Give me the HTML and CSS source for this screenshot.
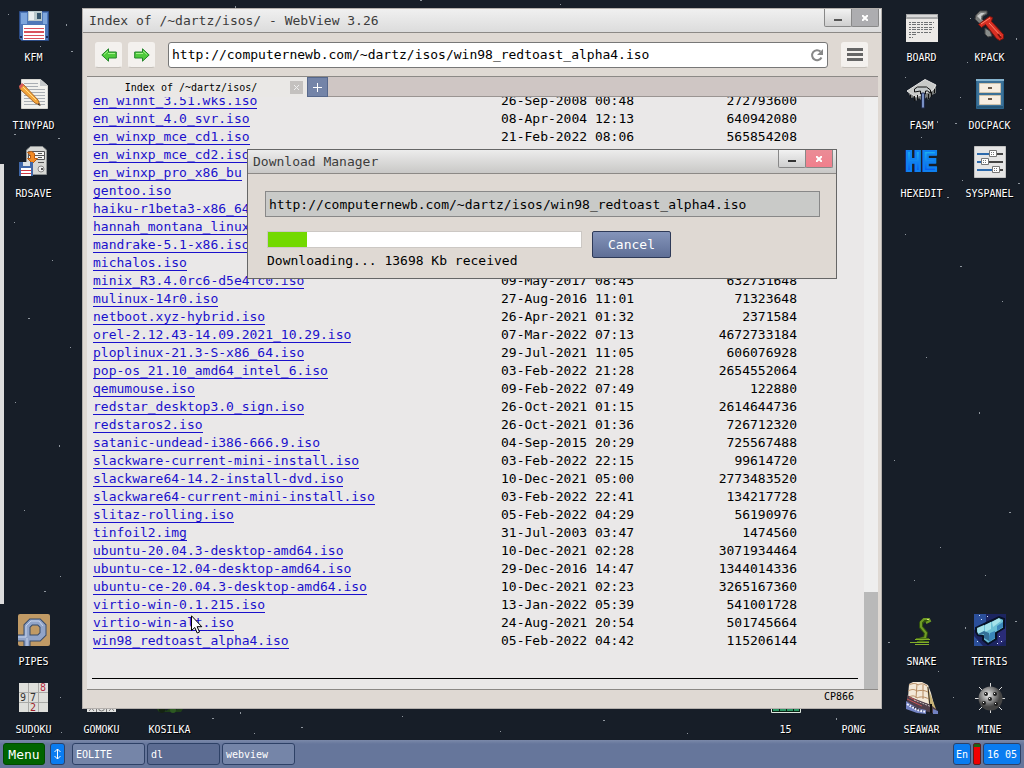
FILE: index.html
```html
<!DOCTYPE html>
<html lang="en">
<head>
  <meta charset="UTF-8">
  <meta name="viewport" content="width=device-width, initial-scale=1.0">
  <title>KolibriOS Desktop</title>
  <link rel="stylesheet" href="styles.css">
</head>
<body>
  <main class="desktop">
    <!-- stars -->
    <svg class="stars" width="1024" height="740" aria-hidden="true">
      <path fill="#8e959d" d="M8 14h1v1h-1zM66 24h1v2h-1zM40 46h1v1h-1zM71 51h2v1h-2zM14 134h2v1h-2zM58 138h2v1h-2zM235 6h1v2h-1zM420 0h2v1h-2zM970 18h1v1h-1zM1016 38h1v2h-1zM967 62h1v1h-1zM905 77h1v1h-1zM960 97h1v1h-1zM1020 109h2v1h-2zM937 121h1v2h-1zM955 123h2v1h-2zM921 137h1v1h-1zM1018 183h2v1h-2zM947 197h2v1h-2zM962 180h1v1h-1zM14 222h1v1h-1zM52 260h1v1h-1zM28 318h2v1h-2zM70 347h1v1h-1zM15 402h1v1h-1zM59 445h1v2h-1zM24 510h1v1h-1zM60 576h1v1h-1zM44 591h2v1h-2zM60 697h1v1h-1zM212 718h2v1h-2zM240 712h1v2h-1zM301 727h2v1h-2zM254 733h1v1h-1zM32 736h2v1h-2zM61 732h1v1h-1zM402 716h1v1h-1zM500 731h1v1h-1zM603 720h2v1h-2zM687 733h1v1h-1zM836 718h1v2h-1zM953 697h1v1h-1zM888 642h2v1h-2zM965 627h1v2h-1zM1015 621h2v1h-2zM938 671h1v1h-1zM914 580h1v1h-1zM905 234h1v1h-1zM960 266h2v1h-2zM1002 301h1v1h-1zM926 357h1v1h-1zM979 412h1v2h-1zM894 460h1v1h-1zM1009 512h2v1h-2zM940 547h1v1h-1zM985 575h1v1h-1zM560 4h1v1h-1z"/>
    </svg>
    <div class="side-bar"></div>

    <div class="icon-row">
      <div class="icon-group left">
        <button class="icon">
          <svg width="32" height="32" viewBox="0 0 32 32">
            <path fill="#4f78b8" stroke="#2c4c86" d="M1.500 1.500h29v29h-27l-2-2z"/>
            <path fill="#7ea6dc" d="M3 3h6v11H3zM25 3h4v11h-4z"/>
            <path fill="#b9c8cc" d="M10 1h14v10H10z"/><path fill="#e9eef0" d="M11 2h5v8h-5z"/>
            <path fill="#33536b" d="M19 3h4v6h-4z"/>
            <path fill="#fff" d="M5 15h22v15H5z"/>
            <path fill="#d9525c" d="M6 18h20v1H6zM6 21h20v2H6zM6 25h20v1H6zM6 28h20v1H6z"/>
            <path fill="#1d2c55" d="M2 26h2v2H2zM28 26h2v2h-2z"/>
          </svg>
          <span>KFM</span>
        </button>
        <button class="icon">
          <svg width="32" height="32" viewBox="0 0 32 32">
            <path fill="#f1f1ed" stroke="#d5d5d0" d="M3.500 1.500h19l7 6v23h-26z"/>
            <path fill="#c4c8ca" d="M22 1v7h8z"/>
            <path stroke="#a9aeb3" d="M6 5.500h14M6 8.500h14M6 11.500h21M6 14.500h21M6 17.500h21M6 20.500h21M6 23.500h21M6 26.500h21"/>
            <path fill="#f3a63c" stroke="#a8682a" d="M2 8l3-2 15 16 2 5-5-2L2 11z"/>
            <path stroke="#ffe08a" d="M5 9l13 13"/>
            <path fill="#d95d5d" d="M1 8l3-3 2 2-4 4z"/>
            <path fill="#333" d="M20 25l3 3-3-1z"/>
          </svg>
          <span>TINYPAD</span>
        </button>
        <button class="icon">
          <svg width="32" height="32" viewBox="0 0 32 32">
            <path fill="#d7d8d5" stroke="#8d9192" d="M8.500 4l4-3.500h12l4 3.500v24.500h-20z"/>
            <path fill="#f5f5f3" stroke="#555" d="M10.500 5.500h16v4h-16zM10.500 9.500h16v4h-16z"/>
            <path stroke="#555" d="M20 7.500h4M20 11.500h4M20 16.500h6"/>
            <circle cx="23" cy="23" r="3" fill="#eee" stroke="#888"/><path fill="#555" d="M23 22h2v2h-2z"/>
            <path fill="#f28b24" stroke="#b95a10" d="M9.500 6.500l4-1 3 2v5h3l-5 5-5-5h3V9z"/>
            <path fill="#3f67a8" d="M1 16h14v14H1z"/><path fill="#dbe2e6" d="M5 16h7v4H5z"/>
            <path fill="#fff" d="M3 22h10v8H3z"/><path fill="#d03a44" d="M3 24h10v1H3zM3 27h10v1H3z"/>
          </svg>
          <span>RDSAVE</span>
        </button>
      </div>

      <div class="icon-group right">
        <button class="icon">
          <svg width="32" height="32" viewBox="0 0 32 32">
            <path fill="#eceae7" d="M0 4h32v28H0z"/><path fill="#a8a9aa" d="M0 4h32v5H0z"/><path fill="#d9d9d9" d="M1 5h30v2H1z"/>
            <path stroke="#6f7274" stroke-dasharray="2 1 4 1 3 1" d="M3 12.500h25M3 14.500h24M3 17.500h25M3 19.500h24M3 22.500h22M3 24.500h8M3 27.500h4"/>
          </svg>
          <span>BOARD</span>
        </button>
        <button class="icon">
          <svg width="32" height="32" viewBox="0 0 32 32">
            <path fill="#7d7f7e" stroke="#454545" d="M1 9l1-4 4-4h7v3L9 6 8 9l3 3-2 3-4-2z"/>
            <path fill="#c9cbca" d="M3 6l4-3h4L7 6v4z"/>
            <path fill="#898d8b" stroke="#454545" d="M11 18l5 3 2 5-4 1-3-3z"/>
            <path fill="#d92f23" stroke="#7b130d" d="M4.500 14.500L15.500 6.500l3 1-1 4 12 13v4l-4 2-3-2-11-14-4 3z"/>
            <path fill="none" stroke="#ff8a70" d="M7 14l9-6M15 13l12 13"/>
            <path stroke="#7b130d" stroke-width="2" d="M24 24l3 4"/>
          </svg>
          <span>KPACK</span>
        </button>
        <button class="icon">
          <svg width="32" height="32" viewBox="0 0 32 32">
            <path fill="#777a79" d="M2 14l3 6 4-1 1 4 3-3 3 3 5-4 1 3 4-5 4-2V7z"/>
            <path fill="#c8cac8" stroke="#e4e4e4" d="M1 13L19 1.500 30 7l-3 5-17 7z"/>
            <path fill="#c3c8c9" stroke="#111" d="M8.500 14v-3l3-2h9l4 3v3l-3-2h-2v3h-5v-3z"/>
            <path fill="#7890c4" stroke="#202a49" d="M15.500 15h3v15h-3z"/>
            <path stroke="#111" d="M4.500 17v3M8.500 18v5M11.500 17v5M22.500 16v5M25.500 14v5M28.500 11v4"/>
          </svg>
          <span>FASM</span>
        </button>
        <button class="icon">
          <svg width="32" height="32" viewBox="0 0 32 32">
            <path fill="#3b7198" stroke="#2c6288" d="M2.500 1.500h27v29h-27z"/><path fill="#86b4cf" d="M2 1h28v2H2z"/>
            <path fill="#f6eee2" stroke="#cfc3ac" d="M5.500 5.500h21v9h-21zM5.500 17.500h21v9h-21z"/>
            <path fill="#69594a" d="M14 9h4v2h-4zM14 20h4v2h-4z"/><path fill="#275879" d="M3 28h26v2H3z"/>
          </svg>
          <span>DOCPACK</span>
        </button>
        <button class="icon">
          <span class="he-logo" aria-hidden="true">HE</span>
          <span>HEXEDIT</span>
        </button>
        <button class="icon">
          <svg width="32" height="32" viewBox="0 0 32 32">
            <path fill="#e5e5e5" stroke="#c2c2c2" d="M.5.5h31v31H.5z"/>
            <path stroke="#444" stroke-width="2" d="M3 8h26M3 16h26M3 24h26"/>
            <path stroke="#2d6aac" stroke-width="2" d="M3 8h13M3 16h5M3 24h16"/>
            <path fill="#fff" stroke="#777" d="M15.500 4.500h7v6h-7zM7.500 12.500h7v6h-7zM18.500 20.500h7v6h-7z"/>
            <path stroke="#777" stroke-dasharray="1 1" d="M17 6.500h4M17 8.500h4M9 14.500h4M9 16.500h4M20 22.500h4M20 24.500h4"/>
          </svg>
          <span>SYSPANEL</span>
        </button>
      </div>
    </div>

    <div class="icon-row">
      <div class="icon-group left-bottom">
        <button class="icon wide">
          <svg width="32" height="32" viewBox="0 0 32 32">
            <rect width="32" height="32" rx="2" fill="#c09a65"/>
            <path fill="none" stroke="#354a6b" stroke-width="7" d="M0 24h9V12l4-4h8l4 4v8l-4 4H9M9 21v11"/>
            <path fill="none" stroke="#91a4c8" stroke-width="5" d="M0 24h9V12l4-4h8l4 4v8l-4 4H9M9 21v11"/>
            <path fill="none" stroke="#c5d2ea" d="M0 23h8V12l5-5h8l4 5M9 24v8"/>
          </svg>
          <span>PIPES</span>
        </button>
        <button class="icon">
          <svg width="32" height="32" viewBox="0 0 32 32">
            <path fill="#a9aaa7" d="M1 1h29v29H1z"/>
            <path fill="#dedfdb" d="M1 1h9v9H1zM11 1h9v9h-9zM21 1h9v9h-9zM1 11h9v9H1zM11 11h9v9h-9zM21 11h9v9h-9zM1 21h9v9H1zM11 21h9v9h-9zM21 21h9v9h-9z"/>
            <g class="sudoku-digits"><text x="22" y="9" fill="#b52b43">8</text><text x="2" y="19">9</text><text x="12" y="19">7</text><text x="12" y="29" fill="#a01e28">2</text></g>
          </svg>
          <span>SUDOKU</span>
        </button>
        <button class="icon">
          <svg width="32" height="32" viewBox="0 0 32 32">
            <path fill="#e4e4e2" d="M1 1h29v29H1z"/>
            <path stroke="#777" d="M10.500 1v29M20.500 1v29M1 10.500h29M1 20.500h29M3 29l5-6M3 23l5 6M23 29l5-6M23 23l5 6"/><circle cx="15.500" cy="26" r="3" fill="none" stroke="#777"/>
          </svg>
          <span>GOMOKU</span>
        </button>
        <button class="icon">
          <svg width="32" height="32" viewBox="0 0 32 32">
            <path fill="#1f3f19" d="M2 26h8l2 3 4-3 5 3 3-3 5 1-2 3H5z"/><circle cx="8" cy="28" r="3" fill="#142312"/><circle cx="19" cy="28" r="3" fill="#2d5a22"/>
          </svg>
          <span>KOSILKA</span>
        </button>
      </div>

      <div class="icon-group right-bottom">
        <button class="icon snake">
          <svg width="32" height="32" viewBox="0 0 32 32">
            <path fill="none" stroke="#31520f" stroke-width="4" d="M23 6h-5l-3 3v4l5 6-1 5-6 2"/>
            <path fill="none" stroke="#6f9c25" stroke-width="2" d="M20 9l4-2-1-2-5 0-3 3v5l5 6-1 5-5 1"/>
            <path stroke="#4b7215" d="M10 24.500h13M11 27.500h12"/>
            <path stroke="#83ad2b" d="M9 25.500h15M4 28.500h19M9 30.500h14"/>
            <path fill="#dce57b" d="M21 5h2v1h-2z"/>
          </svg>
          <span>SNAKE</span>
        </button>
        <button class="icon">
          <svg width="32" height="32" viewBox="0 0 32 32">
            <path fill="#1c2560" d="M0 0h32v32H0z"/><path fill="#2b4f9a" d="M0 0h12v8L0 16zM0 22l9 10H0z"/><path fill="#2a2c78" d="M24 18l8-6v14l-8 6z"/>
            <path fill="#6cc0d5" stroke="#081225" stroke-width="2" d="M2 14L25 3l5 2v9l-8 5v6l-8 5-5-4v-4l-5-1-2-3z"/>
            <path fill="#a5e2ea" d="M3 14l7-3v6l-6 3zM11 11l6-3v7l-6 3zM18 8l7-4 2 3-8 6z"/>
            <path fill="#3a86ba" d="M16 19l5-2v7l-6 4v-6zM23 12l6-4v5l-6 4z"/><path fill="#347098" d="M4 20l6-3 5 2v8l-5-3v-4l-5 1z"/>
            <path fill="#dbeaff" d="M7 5h1v1H7zM13 2h1v1h-1zM27 27h1v1h-1zM25 22h1v1h-1zM3 27h1v1H3zM5 1h1v1H5zM23 29h1v1h-1z"/>
          </svg>
          <span>TETRIS</span>
        </button>
        <button class="icon">
          <svg width="32" height="32" viewBox="0 0 32 32">
            <path fill="#092313" stroke="#dfe8e0" d="M1.500 1.500h29v29h-29z"/>
            <path stroke="#2f9766" stroke-width="4" stroke-dasharray="6 1" d="M3 27h26M3 20h26M3 13h26M3 6h26"/>
          </svg>
          <span>15</span>
        </button>
        <button class="icon">
          <svg width="32" height="32" viewBox="0 0 32 32"><path fill="#ddd" d="M2 6h3v12H2zM27 2h3v12h-3zM14 12h3v3h-3z"/></svg>
          <span>PONG</span>
        </button>
        <button class="icon">
          <svg width="32" height="32" viewBox="0 0 32 32">
            <path fill="#f3e8d8" d="M3 2l4-2h9l6 3 3 8 3 12-6-1-20-6z"/>
            <path fill="none" stroke="#b58a60" d="M3 3c4-2 7-2 9 0 4-2 6-1 9 1M2 9c4-2 6-2 9 0 4-1 7-1 11 1M3 15c4-2 6-1 8 1 4-2 8-1 12 1M11 2l-1 14M17 3v14"/>
            <path fill="#c9b477" d="M21 3l9 24-7-3z"/><path stroke="#332a2a" d="M22 5l2 20"/>
            <path fill="#50404a" d="M1 13l6 3 18 7 6 5-4 3-13-3-13-8z"/>
            <path stroke="#c45355" d="M1 17l15 7M3 15l8 4"/><path stroke="#c5bfc0" stroke-dasharray="2 1" d="M8 18l18 7"/>
            <path fill="#7181c1" d="M0 19l11 7 9 2v4l-9-1-11-4zM27 27l5 2v3h-5z"/>
            <path stroke="#eeeeff" stroke-width="2" stroke-dasharray="2 1" d="M1 22l10 6 9 2"/><path stroke="#111" stroke-width="2" d="M25 22v9"/>
          </svg>
          <span>SEAWAR</span>
        </button>
        <button class="icon">
          <svg width="32" height="32" viewBox="0 0 32 32">
            <defs><radialGradient id="mine" cx="40%" cy="35%"><stop stop-color="#eee"/><stop offset=".5" stop-color="#999"/><stop offset="1" stop-color="#444"/></radialGradient></defs>
            <path stroke="#ddd" d="M16.500 1v30M1 16.500h30M5 5l23 23M28 5L5 28"/>
            <circle cx="16.500" cy="16.500" r="12" fill="url(#mine)"/>
            <g fill="#222"><circle cx="12" cy="12" r="2"/><circle cx="21" cy="12" r="2"/><circle cx="16" cy="17" r="2"/><circle cx="10" cy="21" r="2"/><circle cx="22" cy="22" r="2"/></g>
            <path fill="#fff" d="M11 11h1v1h-1zM20 11h1v1h-1zM15 16h1v1h-1zM9 20h1v1H9zM21 21h1v1h-1z"/>
          </svg>
          <span>MINE</span>
        </button>
      </div>
    </div>

    <!-- browser window -->
    <section class="window browser">
      <header class="title-bar">
        <h1>Index of /~dartz/isos/ - WebView 3.26</h1>
        <div class="window-buttons">
          <button aria-label="Minimize"><svg width="8" height="8"><path fill="#555" d="M0 5h8v2H0z"/></svg></button>
          <button class="close" aria-label="Close"><svg width="6" height="6"><path stroke="#fff" stroke-width="2" d="M0 0l6 6M6 0L0 6"/></svg></button>
        </div>
      </header>
      <div class="toolbar">
        <button class="tool" aria-label="Back"><svg width="16" height="14" viewBox="0 0 16 14"><path fill="#4fcb3c" stroke="#23842a" d="M.8 7L7.500.8v3.200h7.800v6H7.500v3.200z"/><path stroke="#a5f08d" d="M3 6.500l4-3.500M7 5.500h7"/></svg></button>
        <button class="tool" aria-label="Forward"><svg width="16" height="14" viewBox="0 0 16 14"><path fill="#4fcb3c" stroke="#23842a" d="M15.200 7L8.500.8v3.200H.7v6h7.800v3.200z"/><path stroke="#a5f08d" d="M13 6.500L9 3M9 5.500H2"/></svg></button>
        <form class="address">
          <input type="text" aria-label="Address" value="http://computernewb.com/~dartz/isos/win98_redtoast_alpha4.iso">
          <button type="button" aria-label="Reload"><svg width="14" height="14" viewBox="0 0 14 14"><path fill="none" stroke="#888" stroke-width="2" d="M11.500 9.500A5 5 0 1 1 10.500 3.500"/><path fill="#888" d="M13 1v6H7z"/></svg></button>
        </form>
        <button class="tool" aria-label="Settings"><svg width="16" height="14"><path fill="#666" d="M0 0h16v3H0zM0 5h16v3H0zM0 10h16v3H0z"/></svg></button>
      </div>
      <div class="page">
        <div class="tabs">
          <div class="tab">
            <span>Index of /~dartz/isos/</span>
            <button class="tab-close" aria-label="Close tab"><svg width="7" height="7"><path stroke="#eee" d="M1 1l5 5M6 1L1 6"/></svg></button>
          </div>
          <button class="new-tab" aria-label="New tab"><svg width="9" height="9"><path stroke="#fff" d="M4.500 0v9M0 4.500h9"/></svg></button>
        </div>
        <div class="view">
          <div class="listing">
            <table>
              <tbody>
                <tr><td><a href="#">en_winnt_3.51.wks.iso</a></td><td>26-Sep-2008 00:48</td><td>272793600</td></tr>
                <tr><td><a href="#">en_winnt_4.0_svr.iso</a></td><td>08-Apr-2004 12:13</td><td>640942080</td></tr>
                <tr><td><a href="#">en_winxp_mce_cd1.iso</a></td><td>21-Feb-2022 08:06</td><td>565854208</td></tr>
                <tr><td><a href="#">en_winxp_mce_cd2.iso</a></td><td></td><td></td></tr>
                <tr><td><a href="#">en_winxp_pro_x86_bu</a></td><td></td><td></td></tr>
                <tr><td><a href="#">gentoo.iso</a></td><td></td><td></td></tr>
                <tr><td><a href="#">haiku-r1beta3-x86_64</a></td><td></td><td></td></tr>
                <tr><td><a href="#">hannah_montana_linux</a></td><td></td><td></td></tr>
                <tr><td><a href="#">mandrake-5.1-x86.iso</a></td><td></td><td></td></tr>
                <tr><td><a href="#">michalos.iso</a></td><td></td><td></td></tr>
                <tr><td><a href="#">minix_R3.4.0rc6-d5e4fc0.iso</a></td><td>09-May-2017 08:45</td><td>632731648</td></tr>
                <tr><td><a href="#">mulinux-14r0.iso</a></td><td>27-Aug-2016 11:01</td><td>71323648</td></tr>
                <tr><td><a href="#">netboot.xyz-hybrid.iso</a></td><td>26-Apr-2021 01:32</td><td>2371584</td></tr>
                <tr><td><a href="#">orel-2.12.43-14.09.2021_10.29.iso</a></td><td>07-Mar-2022 07:13</td><td>4672733184</td></tr>
                <tr><td><a href="#">ploplinux-21.3-S-x86_64.iso</a></td><td>29-Jul-2021 11:05</td><td>606076928</td></tr>
                <tr><td><a href="#">pop-os_21.10_amd64_intel_6.iso</a></td><td>03-Feb-2022 21:28</td><td>2654552064</td></tr>
                <tr><td><a href="#">qemumouse.iso</a></td><td>09-Feb-2022 07:49</td><td>122880</td></tr>
                <tr><td><a href="#">redstar_desktop3.0_sign.iso</a></td><td>26-Oct-2021 01:15</td><td>2614644736</td></tr>
                <tr><td><a href="#">redstaros2.iso</a></td><td>26-Oct-2021 01:36</td><td>726712320</td></tr>
                <tr><td><a href="#">satanic-undead-i386-666.9.iso</a></td><td>04-Sep-2015 20:29</td><td>725567488</td></tr>
                <tr><td><a href="#">slackware-current-mini-install.iso</a></td><td>03-Feb-2022 22:15</td><td>99614720</td></tr>
                <tr><td><a href="#">slackware64-14.2-install-dvd.iso</a></td><td>10-Dec-2021 05:00</td><td>2773483520</td></tr>
                <tr><td><a href="#">slackware64-current-mini-install.iso</a></td><td>03-Feb-2022 22:41</td><td>134217728</td></tr>
                <tr><td><a href="#">slitaz-rolling.iso</a></td><td>05-Feb-2022 04:29</td><td>56190976</td></tr>
                <tr><td><a href="#">tinfoil2.img</a></td><td>31-Jul-2003 03:47</td><td>1474560</td></tr>
                <tr><td><a href="#">ubuntu-20.04.3-desktop-amd64.iso</a></td><td>10-Dec-2021 02:28</td><td>3071934464</td></tr>
                <tr><td><a href="#">ubuntu-ce-12.04-desktop-amd64.iso</a></td><td>29-Dec-2016 14:47</td><td>1344014336</td></tr>
                <tr><td><a href="#">ubuntu-ce-20.04.3-desktop-amd64.iso</a></td><td>10-Dec-2021 02:23</td><td>3265167360</td></tr>
                <tr><td><a href="#">virtio-win-0.1.215.iso</a></td><td>13-Jan-2022 05:39</td><td>541001728</td></tr>
                <tr><td><a href="#">virtio-win-alt.iso</a></td><td>24-Aug-2021 20:54</td><td>501745664</td></tr>
                <tr><td><a href="#">win98_redtoast_alpha4.iso</a></td><td>05-Feb-2022 04:42</td><td>115206144</td></tr>
              </tbody>
            </table>
            <hr>
          </div>
          <div class="scrollbar"><div class="thumb"></div></div>
        </div>
      </div>
      <footer class="status">CP866</footer>
    </section>

    <!-- download window -->
    <section class="window download">
      <header class="title-bar">
        <h2>Download Manager</h2>
        <div class="window-buttons">
          <button aria-label="Minimize"><svg width="8" height="8"><path fill="#333" d="M0 5h8v2H0z"/></svg></button>
          <button class="close" aria-label="Close"><svg width="6" height="6"><path stroke="#fff" stroke-width="2" d="M0 0l6 6M6 0L0 6"/></svg></button>
        </div>
      </header>
      <div class="download-body">
        <input type="text" aria-label="Download URL" value="http://computernewb.com/~dartz/isos/win98_redtoast_alpha4.iso">
        <div class="download-row">
          <div class="download-state">
            <progress id="download-progress" value="39" max="314"></progress>
            <label for="download-progress">Downloading... 13698 Kb received</label>
          </div>
          <button class="cancel">Cancel</button>
        </div>
      </div>
    </section>

    <svg class="cursor" width="12" height="19" viewBox="0 0 12 19" aria-hidden="true"><path fill="#fff" stroke="#000" d="M.5.8v14.700l3.300-3 2.400 5.500 2.300-1-2.400-5.300h4.700z"/></svg>
  </main>

  <footer class="taskbar">
    <button class="menu">Menu</button>
    <button class="updown" aria-label="Hide taskbar"><svg width="7" height="12"><path fill="none" stroke="#fff" d="M3.500 1v10M.5 4l3-3 3 3M.5 8l3 3 3-3"/></svg></button>
    <button class="task">EOLITE</button>
    <button class="task active">dl</button>
    <button class="task">webview</button>
    <div class="tray">
      <button class="lang">En</button>
      <div class="cpu"></div>
      <button class="clock">16 05</button>
    </div>
  </footer>
</body>
</html>
```
FILE: styles.css
```css
* {
  box-sizing: border-box;
}

body {
  margin: 0;
  height: 100vh;
  display: flex;
  flex-direction: column;
  overflow: hidden;
  background: #171e28;
  font-family: "DejaVu Sans Mono", "Liberation Mono", monospace;
  font-size: 13px;
  color: #000;
}

button,
input {
  font: inherit;
  padding: 0;
  margin: 0;
}

button {
  display: flex;
  align-items: center;
  justify-content: center;
}

/* Desktop */
.desktop {
  position: relative;
  flex: 1;
  min-height: 0;
  display: flex;
  flex-direction: column;
  justify-content: space-between;
}

.stars {
  position: absolute;
  top: 0;
  left: 0;
}

.side-bar {
  position: absolute;
  left: 0;
  top: 164px;
  bottom: 136px;
  width: 4px;
  background: #dcdcdc;
}

.icon-row {
  display: flex;
  justify-content: space-between;
}

.icon-group {
  display: grid;
  grid-auto-rows: 68px;
}

.left {
  grid-template-columns: 68px;
}

.right {
  grid-template-columns: 68px 68px;
}

.left-bottom {
  grid-template-columns: 68px 68px 68px;
}

.right-bottom {
  grid-template-columns: 68px 68px 68px 68px;
}

.wide {
  grid-column: 1 / -1;
  justify-self: start;
  width: 68px;
}

.snake {
  grid-column: 3;
}

.icon {
  flex-direction: column;
  justify-content: flex-start;
  gap: 9px;
  padding: 10px 1px 0 0;
  border: none;
  background: none;
  color: #fff;
  font-size: 10px;
  line-height: 14px;
  text-shadow: 1px 1px 0 #000;
}

.he-logo {
  height: 32px;
  background: linear-gradient(#1bb0ee 6px, #0754ef 26px);
  background-clip: text;
  -webkit-text-stroke: 2px #0f80f0;
  color: transparent;
  font-size: 27px;
  font-weight: bold;
  line-height: 32px;
  text-shadow: none;
}

.sudoku-digits {
  font-size: 10px;
  fill: #333;
  text-shadow: none;
}

/* Windows */
.window {
  position: absolute;
  display: flex;
  flex-direction: column;
  border: 1px solid #666;
  background: #dfd9d3;
}

.browser {
  top: 8px;
  left: 82px;
  right: 142px;
  bottom: 31px;
  border-color: #b4b0ad;
}

.title-bar {
  flex: none;
  display: flex;
  align-items: flex-start;
  justify-content: space-between;
  height: 24px;
  padding: 0 2px 0 6px;
  border-bottom: 1px solid #8c8986;
  background: linear-gradient(#f0f0f0, #dcdcdc);
}

.download .title-bar {
  padding: 0 3px 0 5px;
  background: linear-gradient(#ececec, #c9c8c6);
}

.title-bar h1,
.title-bar h2 {
  margin: 0;
  font-size: 13px;
  font-weight: normal;
  line-height: 23px;
  color: #3c3c3c;
}

.window-buttons {
  display: flex;
}

.window-buttons button {
  width: 28px;
  height: 18px;
  border: 1px solid #888;
  border-top: none;
  border-radius: 0 0 2px 2px;
  background: linear-gradient(#f2f2f2, #cfcfcf);
}

.window-buttons .close {
  margin-left: -1px;
  background: #adadb0;
}

.download .window-buttons .close {
  background: linear-gradient(#ea8c96, #f17f8c);
}

.toolbar {
  flex: none;
  display: flex;
  align-items: center;
  height: 43px;
  padding: 0 13px 0 12px;
}

.tool {
  width: 27px;
  height: 26px;
  margin-right: 6px;
  border: 1px solid #f4f1ee;
  border-bottom-color: #c5c0ba;
  border-radius: 3px;
  background: #f4f1ee;
}

.address {
  flex: 1;
  display: flex;
  align-items: center;
  height: 26px;
  margin: 0 13px 0 7px;
  border: 1px solid #777;
  border-radius: 3px;
  background: #fff;
}

.address input {
  flex: 1;
  min-width: 0;
  padding-left: 3px;
  border: none;
  background: none;
}

.address button {
  width: 20px;
  border: none;
  background: none;
}

.toolbar > .tool:last-child {
  margin-right: 0;
}

.page {
  flex: 1;
  min-height: 0;
  display: flex;
  flex-direction: column;
  margin: 0 3px 0 4px;
  border-top: 1px solid #8c8986;
  border-bottom: 1px solid #8c8986;
  background: #eae8e8;
}

.tabs {
  flex: none;
  display: flex;
  height: 20px;
  background: #cfc6c4;
  border-bottom: 1px solid #9a9492;
}

.tab {
  display: flex;
  align-items: center;
  width: 220px;
  height: 20px;
  padding: 0 4px 0 0;
  background: #eae8e6;
  font-size: 10px;
}

.tab span {
  flex: 1;
  padding-left: 5px;
  text-align: center;
}

.tab-close {
  width: 13px;
  height: 13px;
  border: none;
  background: #c4c1bf;
}

.new-tab {
  width: 21px;
  height: 20px;
  border: 1px solid #57688c;
  background: #7484a8;
}

.view {
  flex: 1;
  min-height: 0;
  display: flex;
}

/* scrolled to the end of the list */
.listing {
  flex: 1;
  display: flex;
  flex-direction: column;
  justify-content: flex-end;
  overflow: hidden;
  padding: 0 6px 10px 5px;
}

.listing table {
  width: 100%;
  border-collapse: collapse;
}

.listing td {
  height: 18px;
  padding: 0 0 0 1px;
  line-height: 18px;
}

.listing td:nth-child(2) {
  width: 176px;
}

.listing td:last-child {
  width: 182px;
  padding-right: 61px;
  text-align: right;
}

.listing a {
  display: inline-block;
  height: 17px;
  border-bottom: 1px solid #1a10cc;
  color: #1a10cc;
  text-decoration: none;
}

.listing hr {
  flex: none;
  width: 100%;
  height: 1px;
  margin: 28px 0 0;
  border: none;
  background: #000;
}

.scrollbar {
  display: flex;
  flex-direction: column;
  justify-content: flex-end;
  width: 14px;
  background: #eeeeee;
}

.thumb {
  height: 97px;
  background: #b9b9b9;
}

.status {
  flex: none;
  height: 18px;
  padding-right: 27px;
  font-size: 10px;
  line-height: 14px;
  text-align: right;
}

/* Download window */
.download {
  top: 149px;
  left: 247px;
  right: 187px;
}

.download-body {
  padding: 17px 16px 8px 17px;
}

.download-body input {
  display: block;
  width: 100%;
  height: 26px;
  padding: 0 3px;
  border: 1px solid #888;
  background: #c9cac8;
}

.download-row {
  display: flex;
  align-items: flex-start;
  gap: 10px;
  margin-top: 14px;
  padding-left: 2px;
}

.download-state {
  width: 315px;
}

.download-state label {
  display: block;
  line-height: 18px;
  margin-top: 4px;
}

progress {
  display: block;
  width: 100%;
  height: 17px;
  border: 1px solid #ccc8c4;
  appearance: none;
  background: #fff;
}

progress::-webkit-progress-bar {
  background: #fff;
}

progress::-webkit-progress-value {
  background: #72d900;
}

.cancel {
  width: 79px;
  height: 27px;
  border: 1px solid #2e3a58;
  border-radius: 2px;
  background: linear-gradient(#8494ba, #5f6f96);
  color: #fff;
}

.cursor {
  position: absolute;
  top: 615px;
  left: 191px;
}

/* Taskbar */
.taskbar {
  flex: none;
  display: flex;
  align-items: center;
  gap: 2px;
  height: 28px;
  padding: 0 3px;
  background: linear-gradient(#7b89a9, #66769b 4px, #66769b);
}

.taskbar button {
  height: 22px;
  border: 1px solid #2e4166;
  border-radius: 3px;
  color: #fff;
}

.taskbar .menu {
  width: 42px;
  border-color: #004a00;
  background: #006400;
}

.taskbar .updown {
  width: 15px;
  margin: 0 5px 0 3px;
  background: #0a7cf0;
}

.taskbar .task {
  width: 73px;
  justify-content: flex-start;
  padding-left: 3px;
  background: #7585a8;
  font-size: 10px;
}

.taskbar .active {
  background: #5c6c92;
}

.tray {
  display: flex;
  gap: 2px;
  margin-left: auto;
  font-size: 10px;
}

.taskbar .lang,
.taskbar .clock {
  background: #0a7cf0;
}

.tray .lang {
  width: 18px;
}

.tray .clock {
  width: 38px;
}

.cpu {
  width: 8px;
  border: 1px solid #5a2020;
  border-radius: 2px;
  background: linear-gradient(#1c6414 3px, #f00000 3px);
}
```
